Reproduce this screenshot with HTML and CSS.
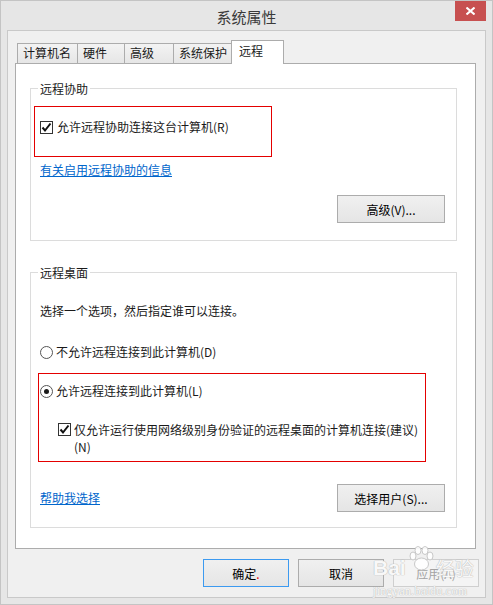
FILE: index.html
```html
<!DOCTYPE html>
<html lang="zh-CN">
<head>
<meta charset="utf-8">
<title>系统属性</title>
<link rel="stylesheet" href="styles.css">
</head>
<body>
<div class="window">
  <div class="titlebar">
    <span></span>
    <span class="title">系统属性</span>
    <button class="close" aria-label="关闭">
      <svg width="9" height="8" viewBox="0 0 9 8"><path d="M0.5 0.5 L8.5 7.5 M8.5 0.5 L0.5 7.5" stroke="#fff" stroke-width="2" fill="none"/></svg>
    </button>
  </div>
  <div class="client">
    <div class="tabs">
      <div class="tab w1">计算机名</div>
      <div class="tab w2">硬件</div>
      <div class="tab w3">高级</div>
      <div class="tab w4">系统保护</div>
      <div class="tab active w5">远程</div>
    </div>
    <div class="panel">
      <fieldset class="group g1">
        <legend>远程协助</legend>
        <label class="check">
          <span class="cb"><svg width="11" height="11" viewBox="0 0 11 11"><path d="M1.5 5.5 L4 8.5 L9.5 1.5" stroke="#111" stroke-width="2" fill="none"/></svg></span>
          <span>允许远程协助连接这台计算机(R)</span>
        </label>
        <a class="link first-link">有关启用远程协助的信息</a>
        <div class="btn-row"><button class="btn">高级(V)...</button></div>
      </fieldset>
      <fieldset class="group g2">
        <legend>远程桌面</legend>
        <div class="intro">选择一个选项，然后指定谁可以连接。</div>
        <label class="radio r1"><span class="rb"></span><span>不允许远程连接到此计算机(D)</span></label>
        <label class="radio r2"><span class="rb on"></span><span>允许远程连接到此计算机(L)</span></label>
        <label class="check nla">
          <span class="cb"><svg width="11" height="11" viewBox="0 0 11 11"><path d="M1.5 5.5 L4 8.5 L9.5 1.5" stroke="#111" stroke-width="2" fill="none"/></svg></span>
          <span>仅允许运行使用网络级别身份验证的远程桌面的计算机连接(建议)<br>(N)</span>
        </label>
        <div class="foot-row">
          <a class="link">帮助我选择</a>
          <button class="btn">选择用户(S)...</button>
        </div>
      </fieldset>
      <div class="mark mark1"></div>
      <div class="mark mark2"></div>
    </div>
    <div class="actions">
      <button class="btn small default">确定<span class="dot">.</span></button>
      <button class="btn small">取消</button>
      <button class="btn small disabled">应用(A)</button>
    </div>
  </div>
  <div class="watermark">
    <div class="wm-logo">
      <span>Bai</span>
      <svg class="paw" width="28" height="26" viewBox="0 0 28 26">
        <ellipse cx="6" cy="10" rx="3" ry="4" />
        <ellipse cx="11" cy="4.5" rx="3" ry="4" />
        <ellipse cx="18" cy="4.5" rx="3" ry="4" />
        <ellipse cx="23" cy="10" rx="3" ry="4" />
        <ellipse cx="14.5" cy="18" rx="7" ry="6" />
      </svg>
      <span class="wm-cn">经验</span>
    </div>
    <div class="wm-url">jingyan.baidu.com</div>
  </div>
</div>
</body>
</html>
```
FILE: styles.css
```css
html, body {
  margin: 0;
  padding: 0;
  background: #e6e6e6;
}

.window {
  position: relative;
  width: 493px;
  height: 605px;
  box-sizing: border-box;
  border: 1px solid #c4c4c4;
  background: #e6e6e6;
  padding: 0 6px 6px;
  display: flex;
  flex-direction: column;
  font-family: "Noto Sans CJK SC", "Microsoft YaHei", sans-serif;
  font-size: 12px;
  color: #1a1a1a;
}

.titlebar {
  height: 29px;
  flex: none;
  display: grid;
  grid-template-columns: 1fr auto 1fr;
}

.title {
  font-size: 15px;
  line-height: 27px;
  padding-top: 2px;
  color: #3a3a3a;
}

.close {
  justify-self: end;
  align-self: start;
  width: 31px;
  height: 20px;
  border: none;
  padding: 0;
  background: #c75050;
  display: flex;
  align-items: center;
  justify-content: center;
}

.client {
  flex: none;
  height: 568px;
  box-sizing: border-box;
  border: 1px solid #c9c9c9;
  background: #f0f0f0;
  padding: 9px 6px 10px 7px;
  display: flex;
  flex-direction: column;
}

.tabs {
  flex: none;
  height: 23px;
  padding-left: 2px;
  display: flex;
  align-items: flex-end;
}

.tab {
  box-sizing: border-box;
  height: 20px;
  border: 1px solid #acacac;
  border-bottom: none;
  background: linear-gradient(#f3f3f3, #e6e6e6);
  padding-left: 5px;
  line-height: 18px;
  white-space: nowrap;
}

.tab + .tab {
  margin-left: -1px;
}

.w1 { width: 61px; }
.w2 { width: 48px; }
.w3 { width: 50px; }
.w4 { width: 59px; }
.w5 { width: 53px; }

.tab.active {
  height: 24px;
  margin-bottom: -1px;
  background: #fff;
  position: relative;
  z-index: 1;
  padding-left: 7px;
  line-height: 19px;
}

.panel {
  flex: none;
  height: 486px;
  margin-right: 3px;
  box-sizing: border-box;
  border: 1px solid #acacac;
  background: #fff;
  position: relative;
}

.group {
  margin: 16px 18px 0 14px;
  padding: 22px 11px 17px 9px;
  border: 1px solid #dcdcdc;
  min-width: 0;
}

.g2 {
  margin-top: 23px;
  padding-bottom: 15px;
}

legend {
  padding: 0 2px;
  margin-left: -2px;
  line-height: 17px;
}

.check, .radio {
  display: flex;
  align-items: center;
  gap: 4px;
  line-height: 16px;
}

.radio {
  gap: 3px;
}

.cb {
  flex: none;
  width: 13px;
  height: 13px;
  box-sizing: border-box;
  border: 1px solid #333;
  background: #fff;
  display: flex;
  align-items: center;
  justify-content: center;
}

.rb {
  flex: none;
  width: 13px;
  height: 13px;
  box-sizing: border-box;
  border: 1px solid #555;
  border-radius: 50%;
  background: #fff;
  display: flex;
  align-items: center;
  justify-content: center;
}

.rb.on::after {
  content: "";
  width: 5px;
  height: 5px;
  border-radius: 50%;
  background: #1a1a1a;
}

.link {
  display: block;
  width: max-content;
  line-height: 16px;
  color: #0066cc;
  text-decoration: underline;
}

.first-link {
  margin-top: 27px;
}

.btn-row {
  display: flex;
  justify-content: flex-end;
  margin-top: 17px;
}

.btn {
  box-sizing: border-box;
  width: 108px;
  height: 28px;
  border: 1px solid #acacac;
  background: linear-gradient(#f0f0f0, #e5e5e5);
  font: inherit;
  color: #000;
  padding: 0;
}

.intro {
  line-height: 16px;
}

.r1 { margin-top: 25px; }
.r2 { margin-top: 23px; }

.nla {
  margin-top: 22px;
  margin-left: 18px;
  align-items: flex-start;
  line-height: 17px;
  gap: 3px;
}

.nla .cb {
  margin-top: 2px;
}

.foot-row {
  margin-top: 29px;
  display: flex;
  justify-content: space-between;
  align-items: center;
}

.mark {
  position: absolute;
  box-sizing: border-box;
  border: 1px solid #e40000;
  pointer-events: none;
}

.mark1 {
  left: 18px;
  top: 42px;
  width: 238px;
  height: 51px;
}

.mark2 {
  left: 22px;
  top: 309px;
  width: 388px;
  height: 89px;
}

.actions {
  flex: none;
  margin-top: 10px;
  display: flex;
  justify-content: flex-end;
  gap: 9px;
}

.btn.small {
  width: 86px;
}

.btn.default {
  border-color: #3c9af0;
}

.dot {
  color: #e00;
}

.btn.disabled {
  border-color: #cfcfcf;
  background: #f4f4f4;
  color: #a3a3a3;
}

.watermark {
  position: absolute;
  left: 372px;
  top: 545px;
  pointer-events: none;
  color: rgba(255, 255, 255, 0.92);
  text-shadow: 0 0 1px #b8b8b8, 0 0 1px #b8b8b8;
}

.wm-logo {
  display: flex;
  align-items: flex-end;
  height: 34px;
}

.wm-logo span {
  font-family: "Liberation Sans", Arial, sans-serif;
  font-size: 21px;
  font-weight: bold;
  line-height: 24px;
}

.wm-logo .wm-cn {
  font-family: "Noto Sans CJK SC", sans-serif;
  font-size: 19px;
  font-weight: normal;
}

.paw {
  align-self: flex-start;
  margin: 0 1px;
}

.paw ellipse {
  fill: rgba(255, 255, 255, 0.9);
  stroke: #c8c8c8;
  stroke-width: 1;
}

.wm-url {
  font-family: "Liberation Serif", serif;
  font-size: 12px;
  line-height: 14px;
  margin-top: 4px;
  letter-spacing: 0.3px;
}
```
